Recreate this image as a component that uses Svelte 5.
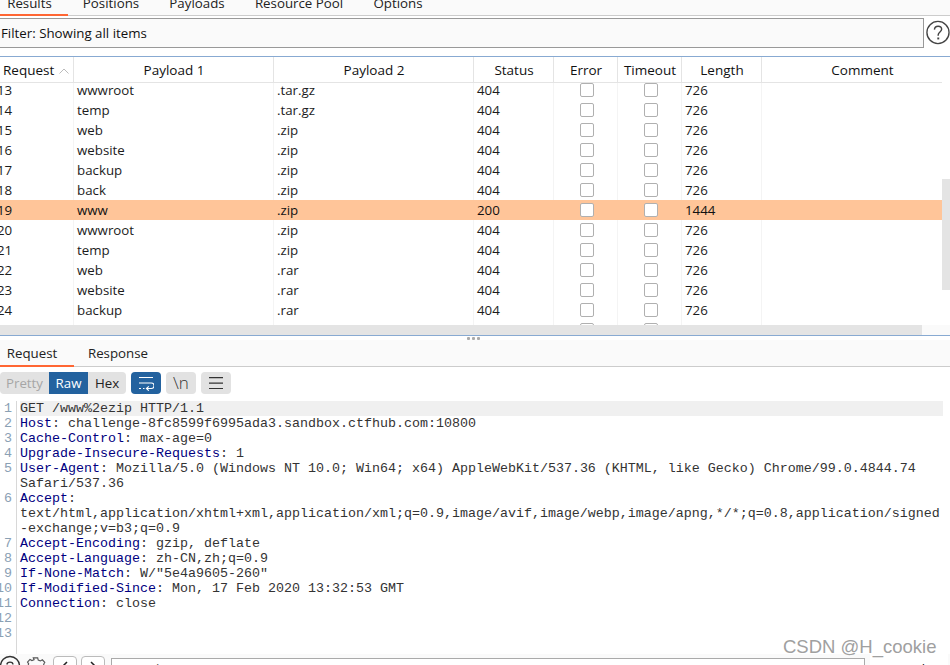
<script>
  const tabs = [
    { label: 'Results', w: 68, active: true },
    { label: 'Positions', w: 86 },
    { label: 'Payloads', w: 86 },
    { label: 'Resource Pool', w: 118 },
    { label: 'Options', w: 80 }
  ];
  const cols = ['Payload 1', 'Payload 2', 'Status', 'Error', 'Timeout', 'Length', 'Comment'];
  const rows = [
    ['13', 'wwwroot', '.tar.gz', '404', '726'],
    ['14', 'temp', '.tar.gz', '404', '726'],
    ['15', 'web', '.zip', '404', '726'],
    ['16', 'website', '.zip', '404', '726'],
    ['17', 'backup', '.zip', '404', '726'],
    ['18', 'back', '.zip', '404', '726'],
    ['19', 'www', '.zip', '200', '1444'],
    ['20', 'wwwroot', '.zip', '404', '726'],
    ['21', 'temp', '.zip', '404', '726'],
    ['22', 'web', '.rar', '404', '726'],
    ['23', 'website', '.rar', '404', '726'],
    ['24', 'backup', '.rar', '404', '726'],
    ['25', 'back', '.rar', '404', '726']
  ];
  const lines = [
    { n: '1', v: 'GET /www%2ezip HTTP/1.1', first: true },
    { n: '2', k: 'Host', v: ': challenge-8fc8599f6995ada3.sandbox.ctfhub.com:10800' },
    { n: '3', k: 'Cache-Control', v: ': max-age=0' },
    { n: '4', k: 'Upgrade-Insecure-Requests', v: ': 1' },
    { n: '5', k: 'User-Agent', v: ': Mozilla/5.0 (Windows NT 10.0; Win64; x64) AppleWebKit/537.36 (KHTML, like Gecko) Chrome/99.0.4844.74' },
    { n: '', v: 'Safari/537.36' },
    { n: '6', k: 'Accept', v: ':' },
    { n: '', v: 'text/html,application/xhtml+xml,application/xml;q=0.9,image/avif,image/webp,image/apng,*/*;q=0.8,application/signed' },
    { n: '', v: '-exchange;v=b3;q=0.9' },
    { n: '7', k: 'Accept-Encoding', v: ': gzip, deflate' },
    { n: '8', k: 'Accept-Language', v: ': zh-CN,zh;q=0.9' },
    { n: '9', k: 'If-None-Match', v: ': W/"5e4a9605-260"' },
    { n: '10', k: 'If-Modified-Since', v: ': Mon, 17 Feb 2020 13:32:53 GMT' },
    { n: '11', k: 'Connection', v: ': close' },
    { n: '12', v: '' },
    { n: '13', v: '' }
  ];
</script>

<div class="page">
  <nav class="top-tabs">
    {#each tabs as t}
      <span class="top-tab" class:active={t.active} style="width:{t.w}px">{t.label}</span>
    {/each}
  </nav>

  <div class="filter-row">
    <div class="filter">Filter: Showing all items</div>
    <svg class="help" width="25" height="25" viewBox="0 0 26 26">
      <circle cx="13.500" cy="13" r="11.500" fill="none" stroke="#444" stroke-width="1.400" />
      <path d="M9.800 10c.2-2.300 1.800-3.500 3.800-3.500 2.100 0 3.700 1.300 3.700 3.200 0 2.700-3.600 2.900-3.600 5.800v.8" fill="none" stroke="#444" stroke-width="1.500" />
      <rect x="12.800" y="18.200" width="2" height="2" fill="#444" />
    </svg>
  </div>

  <section class="table">
    <div class="grid head">
      <div class="th req">Request
        <svg width="10" height="6" viewBox="0 0 10 6"><path d="M.5 5.500 5 1l4.500 4.500" fill="none" stroke="#bbb" /></svg>
      </div>
      {#each cols as c}<div class="th" class:comment={c === 'Comment'}>{c}</div>{/each}
    </div>
    <div class="body">
      <div class="rows">
        {#each rows as r}
          <div class="grid row" class:hit={r[0] === '19'}>
            <div class="td num">{r[0]}</div>
            <div class="td">{r[1]}</div>
            <div class="td">{r[2]}</div>
            <div class="td">{r[3]}</div>
            <div class="td chk"><i></i></div>
            <div class="td chk"><i></i></div>
            <div class="td">{r[4]}</div>
            <div class="td"></div>
          </div>
        {/each}
      </div>
      <div class="vbar"></div>
    </div>
    <div class="hbar-row"><div class="hbar"></div></div>
  </section>

  <div class="divider"><span></span><span></span><span></span></div>

  <nav class="req-tabs">
    <span class="req-tab active">Request</span>
    <span class="req-tab">Response</span>
  </nav>

  <div class="toolbar">
    <div class="seg">
      <span class="off">Pretty</span>
      <span class="on">Raw</span>
      <span>Hex</span>
    </div>
    <button class="ico blue" aria-label="wrap">
      <svg width="16" height="15" viewBox="0 0 16 15" fill="none" stroke="#fff" stroke-width="1.100">
        <path d="M1 1.500h14M1 7h12.300a2.700 2.700 0 0 1 0 5.500H8.500M10.800 10.300l-2.400 2.200 2.400 2.200M1 12.500h2M5 12.500h1.500" />
      </svg>
    </button>
    <button class="ico txt">\n</button>
    <button class="ico" aria-label="menu">
      <svg width="16" height="12" viewBox="0 0 16 12" fill="none" stroke="#333" stroke-width="1.200">
        <path d="M1 .7h14M1 6.200h14M1 11.700h14" />
      </svg>
    </button>
  </div>

  <div class="editor">
    {#each lines as l}
      <div class="line" class:first={l.first}>
        <span class="gut">{l.n}</span>
        <span class="code">{#if l.k}<span class="key">{l.k}</span>{/if}{l.v}</span>
      </div>
    {/each}
  </div>

  <footer class="foot">
    <svg class="f-help" width="22" height="22" viewBox="0 0 22 22">
      <circle cx="10" cy="11" r="9.500" fill="none" stroke="#333" stroke-width="1.400" />
      <path d="M6.800 9.500c.3-1.500 1.600-2.300 3.200-2.300 1.700 0 3 1 3 2.300" fill="none" stroke="#333" stroke-width="1.300" />
    </svg>
    <svg class="gear" width="21" height="21" viewBox="0 0 24 24">
      <path d="M9.500 1h5l.6 2.500 2.500 1 2.200-1.300 2.800 3-1.300 2.100 1 2.500 2.200.6v4l-2.200.6-1 2.500 1.300 2.100-2.800 3-2.200-1.300-2.500 1-.6 2.500h-5l-.6-2.500-2.500-1-2.200 1.300-2.800-3 1.300-2.100-1-2.500L1 15v-4l2.200-.6 1-2.500-1.300-2.100 2.800-3 2.200 1.300 2.500-1z" fill="none" stroke="#555" stroke-width="1.300" />
    </svg>
    <button class="nav back" aria-label="back"><svg width="8" height="8" viewBox="0 0 8 8"><path d="M6 1 2 5" fill="none" stroke="#222" stroke-width="1.500" /></svg></button>
    <button class="nav fwd" aria-label="forward"><svg width="8" height="8" viewBox="0 0 8 8"><path d="m2 1 4 4" fill="none" stroke="#222" stroke-width="1.500" /></svg></button>
    <div class="search">Search...</div>
    <div class="right">0 matches</div>
  </footer>

  <div class="mark">CSDN @H_cookie</div>
</div>

<style>
  :global(body) { margin: 0; background: #fff; }
  .page {
    position: relative;
    width: 950px;
    height: 665px;
    overflow: hidden;
    background: #fff;
    color: #111;
    font: 13.300px/20px "Open Sans", "Noto Sans", sans-serif;
    display: flex;
    flex-direction: column;
  }
  .top-tabs {
    box-sizing: border-box;
    height: 16px;
    flex: none;
    display: flex;
    align-items: flex-end;
    background: #fafafa;
    box-shadow: inset 0 -1px #ccc;
    overflow: hidden;
  }
  .top-tab {
    box-sizing: border-box;
    height: 22px;
    flex: none;
    text-align: center;
    line-height: 18px;
    color: #222;
  }
  .top-tab.active { border-bottom: 2px solid #ff6633; padding-right: 9px; }
  .filter-row {
    flex: none;
    height: 40px;
    padding-top: 2px;
    box-sizing: border-box;
    display: flex;
  }
  .filter {
    box-sizing: border-box;
    width: 925px;
    height: 30px;
    border: 1px solid #999;
    border-left: 0;
    background: #fafafa;
    padding-left: 1px;
    line-height: 28px;
  }
  .help { margin: 2px 0 0 1px; flex: none; }
  .table { flex: none; border-top: 1px solid #88aad2; }
  .grid {
    display: grid;
    grid-template-columns: 73px 200px 200px 80px 64px 64px 80px 181px;
  }
  .head { width: 942px; height: 25px; border-bottom: 1px solid #e4e4e4; }
  .th {
    text-align: center;
    font-size: 13.500px;
    line-height: 27px;
    height: 25px;
    padding-left: 2px;
    box-shadow: inset 1px 0 #e4e4e4;
  }
  .th.comment { padding-left: 22px; }
  .th.req {
    text-align: left;
    padding-left: 3px;
    box-shadow: none;
    white-space: nowrap;
  }
  .th.req svg { margin-left: 1px; vertical-align: 1px; }
  .body { position: relative; height: 242px; overflow: hidden; }
  .rows { margin-top: -3px; }
  .row { width: 942px; height: 20px; }
  .td {
    padding-left: 4px;
    line-height: 20px;
    box-shadow: inset 1px 0 #f4f4f4;
    white-space: nowrap;
    color: #1c1c1c;
  }
  .td.num { padding-left: 0; margin-left: -3px; box-shadow: none; }
  .hit { background: #ffc599; }
  .hit .td { box-shadow: none; color: #111; }
  .td.chk { display: flex; justify-content: center; padding-left: 3px; }
  .chk i {
    display: block;
    box-sizing: border-box;
    width: 14px;
    height: 14px;
    margin-top: 3px;
    background: #fff;
    border: 1px solid #b0b0b0;
    border-radius: 2px;
  }
  .vbar {
    position: absolute;
    right: 0;
    top: 96px;
    width: 8px;
    height: 111px;
    background: #e4e4e4;
  }
  .hbar-row { height: 10px; background: #fafafa; }
  .hbar { width: 922px; height: 10px; background: #e4e4e4; }
  .divider {
    flex: none;
    height: 4px;
    border-top: 1px solid #88aad2;
    display: flex;
    justify-content: center;
    gap: 2px;
    align-items: flex-end;
    padding-right: 3px;
  }
  .divider span { width: 3px; height: 3px; background: #aaa; border-radius: 1px; }
  .req-tabs {
    flex: none;
    box-sizing: border-box;
    height: 27px;
    display: flex;
    background: #fafafa;
    border-bottom: 1px solid #ccc;
  }
  .req-tab { box-sizing: border-box; height: 27px; padding-top: 3px; text-align: center; color: #222; }
  .req-tab:first-child { width: 74px; padding-right: 10px; }
  .req-tab:last-child { width: 84px; padding-left: 4px; }
  .req-tab.active { border-bottom: 2px solid #ff6633; }
  .toolbar {
    flex: none;
    height: 22px;
    margin-top: 5px;
    display: flex;
    gap: 5px;
  }
  .seg {
    display: flex;
    width: 126px;
    height: 22px;
    background: #e2e2e2;
    border-radius: 4px;
    overflow: hidden;
    line-height: 22px;
  }
  .seg span { text-align: center; }
  .seg span:nth-child(1) { width: 49px; color: #a6a6a6; }
  .seg span:nth-child(2) { width: 39px; background: #23629f; color: #fff; }
  .seg span:nth-child(3) { width: 38px; color: #222; }
  .ico {
    width: 30px;
    height: 22px;
    padding: 0;
    border: 0;
    border-radius: 4px;
    background: #e2e2e2;
    display: flex;
    align-items: center;
    justify-content: center;
    font: inherit;
    color: #333;
  }
  .blue { background: #23629f; }
  .ico.txt { font-size: 17px; font-weight: 300; }
  .editor {
    flex: none;
    margin-top: 7px;
    height: 253px;
    font: 13.333px/15px "Liberation Mono", monospace;
    color: #333;
    white-space: pre;
    position: relative;
  }
  .editor::before {
    content: "";
    position: absolute;
    left: 16px;
    top: 0;
    bottom: 0;
    width: 1px;
    background: #d8d8d8;
  }
  .line { display: flex; height: 15px; }
  .gut {
    box-sizing: border-box;
    flex: none;
    width: 17px;
    margin-right: 3px;
    padding-right: 5px;
    display: flex;
    justify-content: flex-end;
    color: #8aa0b4;
  }
  .code { flex: 1; }
  .first .code { background: #f0f0f0; margin-right: 7px; }
  .key { color: #000080; }
  .foot {
    flex: none;
    height: 11px;
    background: #fafafa;
    overflow: hidden;
    position: relative;
  }
  .f-help { position: absolute; left: 0; top: 1px; }
  .gear { position: absolute; left: 25px; top: 3px; }
  .nav {
    position: absolute;
    top: 2px;
    width: 24px;
    height: 24px;
    padding: 4px 0 0;
    background: #fff;
    border: 1px solid #bbb;
    border-radius: 4px;
    display: flex;
    justify-content: center;
    align-items: flex-start;
  }
  .back { left: 53px; }
  .fwd { left: 81px; }
  .search {
    position: absolute;
    left: 111px;
    top: 4px;
    width: 754px;
    height: 24px;
    box-sizing: border-box;
    background: #fff;
    border: 1px solid #aaa;
    padding-left: 10px;
    color: #555;
  }
  .right {
    position: absolute;
    left: 870px;
    top: 0;
    width: 78px;
    height: 30px;
    box-sizing: border-box;
    padding: 5px 0 0 10px;
    background: #fff;
    color: #111;
  }
  .mark {
    position: absolute;
    left: 783px;
    top: 636px;
    font: 18.500px/22px "Liberation Sans", sans-serif;
    color: #a0a0a0;
  }
</style>
